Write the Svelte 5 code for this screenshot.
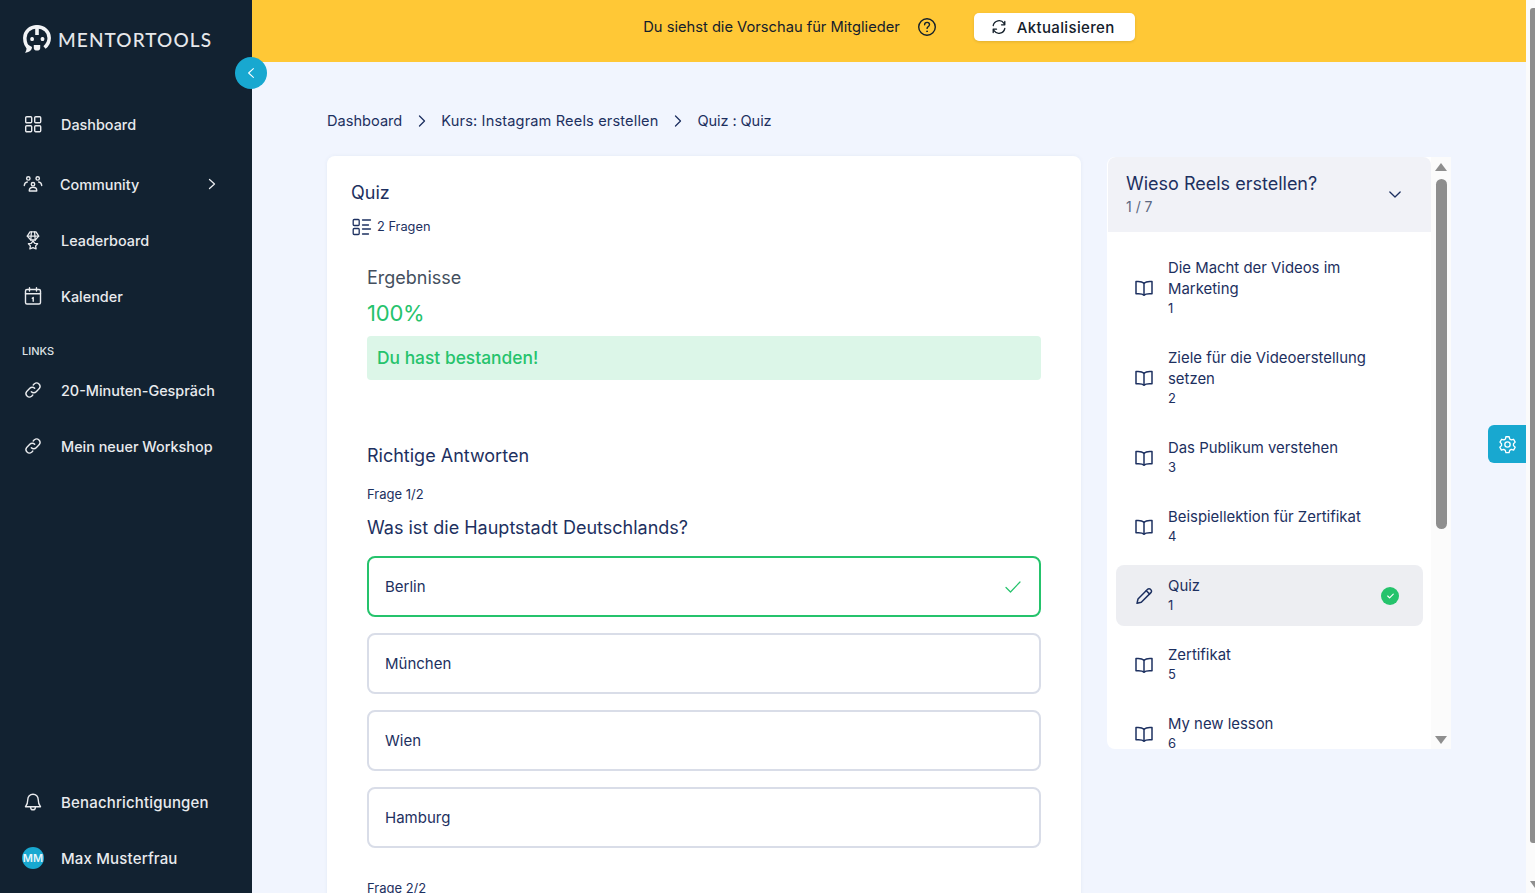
<script>
	const navTop = [
		{ label: 'Dashboard', icon: 'grid' },
		{ label: 'Community', icon: 'people', arrow: true },
		{ label: 'Leaderboard', icon: 'medal' },
		{ label: 'Kalender', icon: 'calendar' }
	];
	const navLinks = ['20-Minuten-Gespräch', 'Mein neuer Workshop'];
	const answers = [
		{ text: 'Berlin', correct: true },
		{ text: 'München' },
		{ text: 'Wien' },
		{ text: 'Hamburg' }
	];
	const lessons = [
		{ title: 'Die Macht der Videos im Marketing', num: 1 },
		{ title: 'Ziele für die Videoerstellung setzen', num: 2 },
		{ title: 'Das Publikum verstehen', num: 3 },
		{ title: 'Beispiellektion für Zertifikat', num: 4 },
		{ title: 'Quiz', num: 1, quiz: true },
		{ title: 'Zertifikat', num: 5 },
		{ title: 'My new lesson', num: 6 }
	];
</script>

{#snippet linkIcon()}
	<svg class="nav-icon" viewBox="0 0 20 20" fill="none" stroke="currentColor" stroke-width="1.4" stroke-linecap="round" stroke-linejoin="round">
		<path d="M8.3 11.7a3.4 3.4 0 0 0 4.9 0l3.1-3.1a3.5 3.5 0 0 0-4.9-4.9l-1.2 1.2" />
		<path d="M11.7 8.3a3.4 3.4 0 0 0-4.9 0l-3.1 3.1a3.5 3.5 0 0 0 4.9 4.9l1.2-1.2" />
	</svg>
{/snippet}

{#snippet bookIcon()}
	<svg class="lesson-icon" viewBox="0 0 20 20" fill="none" stroke="currentColor" stroke-width="1.5" stroke-linecap="round" stroke-linejoin="round">
		<path d="M10 5.2C8.6 3.9 6.6 3.4 3.6 3.5H2v12.2h2.5c2.6 0 4.4.4 5.5 1.4 1.1-1 2.9-1.4 5.5-1.4H18V3.5h-1.6c-3 -.1-5 .4-6.4 1.7Z" />
		<path d="M10 5.2v11.9" />
	</svg>
{/snippet}

<div class="app">
	<aside class="sidebar">
		<div class="logo">
			<svg class="logo-mark" viewBox="0 0 28 28" fill="none">
				<path stroke="#f2f4f6" stroke-width="3.500" d="M7 24C3 21.500 1.800 17 1.800 13 1.800 6.500 7 1.800 14 1.800S26.200 6.500 26.200 13c0 4-1.700 7-4.700 9.500" />
				<path fill="#f2f4f6" d="M3 18.500 9 22c0 3-2.200 5.300-7 5.700 1.700-2.200 2.200-5 1-9.200Z" />
				<rect x="12.200" y="0.500" width="3.600" height="9.500" fill="#f2f4f6" />
				<rect x="7.300" y="12" width="3.600" height="4" rx="1.500" fill="#f2f4f6" />
				<rect x="17.700" y="12" width="3.600" height="4" rx="1.500" fill="#f2f4f6" />
				<path fill="#f2f4f6" d="M10.800 20h6.400v3.300c0 1.400-1.400 2.300-3.200 2.300s-3.200-.9-3.200-2.300Z" />
			</svg>
			<span class="logo-text">MENTORTOOLS</span>
		</div>

		<nav class="nav-main">
			{#each navTop as item}
				<div class="nav-item" class:community={item.arrow}>
					{#if item.icon === 'grid'}
						<svg class="nav-icon" viewBox="0 0 20 20" fill="none" stroke="currentColor" stroke-width="1.4">
							<rect x="2.700" y="2.700" width="6" height="6" rx="1" />
							<rect x="11.700" y="2.700" width="6" height="6" rx="1" />
							<rect x="2.700" y="11.700" width="6" height="6" rx="1" />
							<rect x="11.700" y="11.700" width="6" height="6" rx="1" />
						</svg>
					{:else if item.icon === 'people'}
						<svg class="nav-icon" viewBox="0 0 20 20" fill="none" stroke="currentColor" stroke-width="1.400" stroke-linecap="round" stroke-linejoin="round">
							<circle cx="5.300" cy="4.400" r="1.700" />
							<circle cx="14.700" cy="4.400" r="1.700" />
							<circle cx="10" cy="10.200" r="1.700" />
							<path d="M1.300 11.500c.2-2 1.400-3.300 3-3.500M18.700 11.500c-.2-2-1.400-3.300-3-3.500M6.300 17v-.7c0-1.700 1.500-3 3.700-3s3.700 1.300 3.700 3v.7Z" />
						</svg>
					{:else if item.icon === 'medal'}
						<svg class="nav-icon" viewBox="0 0 20 20" fill="none" stroke="currentColor" stroke-width="1.300" stroke-linecap="round" stroke-linejoin="round">
							<path d="M7 1.800h6l2.700 4.300-3.500 3.900H7.800L4.300 6.100Z" />
							<path d="M8.400 2 7.800 10M11.600 2l.6 8M4.300 6.100h11.400" />
							<path d="m10 11 1.800 2.400 2.800.3-2 2.200.5 3-3.100-1.300-3.100 1.300.5-3-2-2.200 2.800-.3Z" />
						</svg>
					{:else}
						<svg class="nav-icon" viewBox="0 0 20 20" fill="none" stroke="currentColor" stroke-width="1.400" stroke-linecap="round" stroke-linejoin="round">
							<rect x="2.500" y="3.500" width="15" height="14.500" rx="1.500" />
							<path d="M2.500 7.800h15M6.500 1.700v3.400M13.500 1.700v3.400M9.200 12.200l1-.7v3.800" />
						</svg>
					{/if}
					<span class="nav-label">{item.label}</span>
					{#if item.arrow}
						<svg class="nav-arrow" viewBox="0 0 8 12" fill="none" stroke="currentColor" stroke-width="1.300" stroke-linecap="round" stroke-linejoin="round">
							<path d="m1.500 1.500 5 4.500-5 4.500" />
						</svg>
					{/if}
				</div>
			{/each}

			<div class="nav-heading">LINKS</div>
			{#each navLinks as link}
				<div class="nav-item">
					{@render linkIcon()}
					<span class="nav-label">{link}</span>
				</div>
			{/each}
		</nav>

		<div class="nav-bottom">
			<div class="nav-item">
				<svg class="nav-icon" viewBox="0 0 20 20" fill="none" stroke="currentColor" stroke-width="1.400" stroke-linecap="round" stroke-linejoin="round">
					<path d="M10 2.200c-3.100 0-5.200 2.300-5.200 5.300 0 4-1 5.600-2.300 7.200h15c-1.300-1.600-2.300-3.200-2.300-7.200 0-3-2.100-5.300-5.200-5.300Z" />
					<path d="M7.600 14.900c0 1.800 1 2.900 2.400 2.900s2.400-1.100 2.400-2.900" />
				</svg>
				<span class="nav-label">Benachrichtigungen</span>
			</div>
			<div class="nav-item">
				<span class="avatar">MM</span>
				<span class="nav-label">Max Musterfrau</span>
			</div>
		</div>
	</aside>

	<button class="collapse" aria-label="Seitenleiste einklappen">
		<svg viewBox="0 0 10 14" width="8" height="12" fill="none" stroke="currentColor" stroke-width="1.300" stroke-linecap="round" stroke-linejoin="round">
			<path d="M8 1.500 2 7l6 5.500" />
		</svg>
	</button>

	<div class="main">
		<header class="banner">
			<span class="banner-text">Du siehst die Vorschau für Mitglieder</span>
			<svg class="help" viewBox="0 0 20 20" fill="none" stroke="currentColor" stroke-width="1.400" stroke-linecap="round">
				<circle cx="10" cy="10" r="8.300" />
				<path d="M7.600 7.800c0-1.500 1-2.400 2.500-2.400s2.400.9 2.400 2.200c0 1.100-.6 1.700-1.500 2.200-.7.400-.9.800-.9 1.600" />
				<circle cx="10" cy="14.300" r=".5" fill="currentColor" stroke-width=".7" />
			</svg>
			<button class="refresh">
				<svg viewBox="0 0 16 16" width="16" height="16" fill="none" stroke="currentColor" stroke-width="1.300" stroke-linecap="round" stroke-linejoin="round">
					<path d="M2.200 6.500A6 6 0 0 1 13 4.300l.7 1.500M13.800 2.500v3.300h-3.300" />
					<path d="M13.800 9.500A6 6 0 0 1 3 11.700l-.7-1.500M2.200 13.500v-3.300h3.300" />
				</svg>
				Aktualisieren
			</button>
		</header>

		<div class="content">
			<div class="breadcrumbs">
				<span>Dashboard</span>
				<svg viewBox="0 0 8 12" width="8" height="12" fill="none" stroke="currentColor" stroke-width="1.300" stroke-linecap="round" stroke-linejoin="round"><path d="m1.500 1 5 5-5 5" /></svg>
				<span class="crumb-course">Kurs: Instagram Reels erstellen</span>
				<svg viewBox="0 0 8 12" width="8" height="12" fill="none" stroke="currentColor" stroke-width="1.300" stroke-linecap="round" stroke-linejoin="round"><path d="m1.500 1 5 5-5 5" /></svg>
				<span class="crumb-last">Quiz : Quiz</span>
			</div>

			<div class="columns">
				<section class="quiz-card">
					<h1 class="quiz-title">Quiz</h1>
					<div class="quiz-meta">
						<svg viewBox="0 0 20 18" width="20" height="18" fill="none" stroke="currentColor" stroke-width="1.300" stroke-linecap="round" stroke-linejoin="round">
							<rect x="1.200" y="1.500" width="6" height="6" rx="1" />
							<rect x="1.200" y="10.500" width="6" height="6" rx="1" />
							<path d="M10.500 2h8M10.500 7h6M10.500 11h8M10.500 16h6" />
						</svg>
						<span>2 Fragen</span>
					</div>

					<div class="results">
						<h2 class="section-title gray">Ergebnisse</h2>
						<div class="score">100%</div>
						<div class="passed">Du hast bestanden!</div>

						<h2 class="section-title answers-title">Richtige Antworten</h2>
						<div class="question-count">Frage 1/2</div>
						<h3 class="question">Was ist die Hauptstadt Deutschlands?</h3>
						<div class="options">
							{#each answers as answer}
								<div class="option" class:correct={answer.correct}>
									<span>{answer.text}</span>
									{#if answer.correct}
										<svg viewBox="0 0 16 12" width="16" height="12" fill="none" stroke="currentColor" stroke-width="1.200" stroke-linecap="round" stroke-linejoin="round"><path d="m1 6.500 4.500 4.500L15 1" /></svg>
									{/if}
								</div>
							{/each}
						</div>
						<div class="question-count next">Frage 2/2</div>
					</div>
				</section>

				<aside class="lesson-panel">
					<div class="lesson-scroll">
						<div class="module-head">
							<div>
								<div class="module-title">Wieso Reels erstellen?</div>
								<div class="module-count">1 / 7</div>
							</div>
							<svg viewBox="0 0 14 8" width="12" height="7" fill="none" stroke="currentColor" stroke-width="1.500" stroke-linecap="round" stroke-linejoin="round"><path d="m1 1 6 6 6-6" /></svg>
						</div>
						<div class="lesson-list">
							{#each lessons as lesson}
								<div class="lesson" class:active={lesson.quiz}>
									{#if lesson.quiz}
										<svg class="lesson-icon" viewBox="0 0 20 20" fill="none" stroke="currentColor" stroke-width="1.500" stroke-linecap="round" stroke-linejoin="round">
											<path d="M3 17.300 4 13 13.600 3.300a2 2 0 0 1 2.900 0l.4.400a2 2 0 0 1 0 2.900L7.300 16.200Z" />
											<path d="m12.300 4.700 3.200 3.200" />
										</svg>
									{:else}
										{@render bookIcon()}
									{/if}
									<div class="lesson-text">
										<div class="lesson-title">{lesson.title}</div>
										<div class="lesson-num">{lesson.num}</div>
									</div>
									{#if lesson.quiz}
										<span class="done">
											<svg viewBox="0 0 10 8" width="7" height="6" fill="none" stroke="#fff" stroke-width="1.600" stroke-linecap="round" stroke-linejoin="round"><path d="m1 4 2.700 2.700L9 1.300" /></svg>
										</span>
									{/if}
								</div>
							{/each}
						</div>
					</div>
					<div class="panel-scrollbar">
						<span class="arrow up"></span>
						<span class="thumb"></span>
						<span class="arrow down"></span>
					</div>
				</aside>
			</div>
		</div>
	</div>

	<div class="page-scrollbar">
		<span class="page-thumb"></span>
		<span class="page-arrow"></span>
	</div>

	<button class="settings" aria-label="Einstellungen">
		<svg viewBox="0 0 20 20" width="19" height="19" fill="none" stroke="currentColor" stroke-width="1.400" stroke-linecap="round" stroke-linejoin="round">
			<circle cx="10" cy="10" r="2.800" />
			<path d="M8.300 1.800h3.400l.6 2.400 1.700 1 2.400-.7 1.700 3-1.800 1.700v2l1.800 1.700-1.700 3-2.400-.7-1.700 1-.6 2.400H8.300l-.6-2.400-1.700-1-2.400.7-1.700-3 1.800-1.700v-2L2.100 7.500l1.700-3 2.400.7 1.700-1Z" />
		</svg>
	</button>
</div>

<style>
	:global(body) {
		margin: 0;
		background: #f1f5fe;
	}

	.app {
		display: flex;
		height: 893px;
		overflow: hidden;
		position: relative;
		font-family: Inter, 'Liberation Sans', sans-serif;
		color: #1d3060;
	}

	h1, h2, h3 {
		margin: 0;
		font-weight: 400;
	}

	button {
		border: none;
		font-family: inherit;
		padding: 0;
	}

	/* sidebar */
	.sidebar {
		flex: 0 0 252px;
		display: flex;
		flex-direction: column;
		background: #122231;
		color: #e9ebee;
	}

	.logo {
		display: flex;
		align-items: center;
		gap: 7px;
		padding: 25px 0 0 23px;
		height: 28px;
	}

	.logo-mark {
		width: 28px;
		height: 28px;
		flex: none;
	}

	.logo-text {
		font-family: Lato, sans-serif;
		font-size: 19px;
		font-weight: 500;
		letter-spacing: 1.1px;
		color: #e6e8eb;
	}

	.nav-main {
		flex: 1;
		padding-top: 43px;
	}

	.nav-item {
		display: flex;
		align-items: center;
		height: 56px;
		padding-left: 23px;
		font-size: 14.4px;
		font-weight: 500;
	}

	.nav-item.community {
		margin-top: 4px;
	}

	.nav-item.community .nav-label {
		margin-left: 17px;
	}

	.nav-icon {
		width: 20px;
		height: 20px;
		flex: none;
	}

	.nav-label {
		margin-left: 18px;
		white-space: nowrap;
	}

	.nav-arrow {
		width: 8px;
		height: 12px;
		margin-left: 69px;
	}

	.nav-heading {
		font-size: 11px;
		font-weight: 500;
		line-height: 14px;
		padding: 20px 0 4px 22px;
		color: #dfe2e6;
	}

	.nav-bottom {
		padding-bottom: 7px;
	}

	.nav-bottom .nav-item {
		font-size: 15px;
		letter-spacing: 0.17px;
	}

	.avatar {
		width: 22px;
		height: 22px;
		margin-left: -1px;
		border-radius: 50%;
		background: #18a8d0;
		color: #e6f6fb;
		font-size: 11px;
		font-weight: 600;
		line-height: 22px;
		letter-spacing: 0;
		text-align: center;
		flex: none;
	}

	.avatar + .nav-label {
		margin-left: 17px;
	}

	.collapse {
		position: absolute;
		left: 235px;
		top: 57px;
		width: 32px;
		height: 32px;
		border-radius: 50%;
		background: #18a8d0;
		color: #fff;
		display: flex;
		align-items: center;
		justify-content: center;
		z-index: 2;
	}

	/* main column */
	.main {
		flex: 1;
		min-width: 0;
		display: flex;
		flex-direction: column;
	}

	.banner {
		flex: 0 0 62px;
		background: #ffc836;
		color: #14202b;
		display: flex;
		align-items: center;
		justify-content: center;
		font-size: 14.7px;
		padding-bottom: 8px;
		box-sizing: border-box;
		height: 62px;
	}

	.help {
		width: 20px;
		height: 20px;
		margin-left: 17px;
	}

	.refresh {
		display: flex;
		align-items: center;
		gap: 10px;
		width: 161px;
		height: 28px;
		margin-left: 37px;
		padding-left: 17px;
		box-sizing: border-box;
		background: #fff;
		border-radius: 5px;
		color: #14202b;
		font-size: 15px;
		font-weight: 500;
		letter-spacing: 0.35px;
		box-shadow: 0 1px 3px rgba(0, 0, 0, 0.12);
	}

	.content {
		padding: 49px 75px 0;
	}

	.breadcrumbs {
		display: flex;
		align-items: center;
		gap: 15.5px;
		height: 20px;
		font-size: 14.6px;
	}

	.crumb-course {
		letter-spacing: 0.14px;
	}

	.crumb-last {
		letter-spacing: -0.1px;
	}

	.columns {
		display: flex;
		align-items: flex-start;
		gap: 26px;
		margin-top: 25px;
	}

	.quiz-card {
		flex: 0 0 754px;
		box-sizing: border-box;
		height: 780px;
		padding: 25px 24px 0;
		background: #fff;
		border-radius: 8px;
		box-shadow: 0 0 4px rgba(40, 60, 120, 0.06);
	}

	.quiz-title {
		font-size: 18px;
		line-height: 24px;
	}

	.quiz-meta {
		display: flex;
		align-items: center;
		gap: 5px;
		margin-top: 13px;
		font-size: 12.8px;
		line-height: 18px;
		padding-left: 1px;
	}

	.results {
		padding: 0 16px;
	}

	.section-title {
		font-size: 18px;
		line-height: 24px;
	}

	.gray {
		color: #444f5e;
		margin-top: 30px;
	}

	.score {
		margin-top: 9px;
		font-size: 22px;
		letter-spacing: -0.2px;
		line-height: 28px;
		color: #25c36c;
	}

	.passed {
		margin-top: 9px;
		height: 44px;
		padding-left: 10px;
		border-radius: 4px;
		background: #dcf6e8;
		color: #25c36c;
		font-size: 17.4px;
		font-weight: 500;
		line-height: 44px;
	}

	.answers-title {
		margin-top: 64px;
	}

	.question-count {
		margin-top: 17px;
		font-size: 13px;
		line-height: 18px;
	}

	.question-count.next {
		margin-top: 31px;
	}

	.question {
		margin-top: 13px;
		font-size: 18px;
		line-height: 24px;
	}

	.options {
		display: flex;
		flex-direction: column;
		gap: 16px;
		margin-top: 16px;
	}

	.option {
		display: flex;
		align-items: center;
		justify-content: space-between;
		height: 61px;
		box-sizing: border-box;
		padding: 0 18px 0 16px;
		border: 2px solid #d9dde8;
		border-radius: 8px;
		font-size: 15px;
	}

	.option.correct {
		border-color: #25c36c;
	}

	.option svg {
		color: #25c36c;
	}

	/* lesson panel */
	.lesson-panel {
		flex: 0 0 344px;
		height: 592px;
		margin-top: 1px;
		display: flex;
		background: #fff;
		border-radius: 8px 0 0 8px;
		overflow: hidden;
	}

	.lesson-scroll {
		flex: 1;
		min-width: 0;
		overflow: hidden;
	}

	.module-head {
		display: flex;
		align-items: center;
		justify-content: space-between;
		height: 75px;
		box-sizing: border-box;
		padding: 0 30px 0 18px;
		margin-left: 1px;
		background: #f1f2f7;
		border-radius: 8px 8px 0 0;
	}

	.module-title {
		font-size: 18px;
		line-height: 25px;
	}

	.module-count {
		font-size: 14px;
		line-height: 22px;
		color: #5c6780;
	}

	.lesson-list {
		display: flex;
		flex-direction: column;
		gap: 8px;
		padding: 15px 8px 0 9px;
	}

	.lesson {
		display: flex;
		align-items: center;
		flex: none;
		padding: 10px 24px 10px 18px;
		border-radius: 8px;
	}

	.lesson.active {
		background: #edeef2;
	}

	.lesson-icon {
		width: 20px;
		height: 20px;
		flex: none;
		margin-right: 14px;
	}

	.lesson-text {
		flex: 1;
		min-width: 0;
		padding-right: 24px;
	}

	.lesson-title {
		padding-top: 1px;
		font-size: 14.9px;
		line-height: 21px;
	}

	.lesson-num {
		font-size: 13px;
		line-height: 16px;
		padding-bottom: 3px;
	}

	.done {
		width: 18px;
		height: 18px;
		border-radius: 50%;
		background: #25c36c;
		display: flex;
		align-items: center;
		justify-content: center;
		flex: none;
	}

	.panel-scrollbar {
		flex: 0 0 20px;
		display: flex;
		flex-direction: column;
		align-items: center;
		box-sizing: border-box;
		background: #fbfbfb;
	}

	.arrow {
		width: 0;
		height: 0;
		border-left: 6.5px solid transparent;
		border-right: 6.5px solid transparent;
	}

	.arrow.up {
		margin-top: 6px;
		border-bottom: 8px solid #8e8e8e;
	}

	.arrow.down {
		margin-top: auto;
		margin-bottom: 5px;
		border-top: 8px solid #8e8e8e;
	}

	.thumb {
		width: 11px;
		height: 350px;
		margin-top: 8px;
		border-radius: 5.500px;
		background: #8e8e8e;
	}

	/* page scrollbar */
	.page-scrollbar {
		flex: 0 0 9px;
		display: flex;
		flex-direction: column;
		align-items: flex-end;
		background: #fbfbfb;
	}

	.page-thumb {
		width: 5px;
		height: 835px;
		margin-top: 8px;
		border-radius: 3px 0 0 3px;
		background: #8e8e8e;
	}

	.page-arrow {
		margin-top: auto;
		margin-bottom: 5px;
		width: 0;
		height: 0;
		border-left: 5px solid transparent;
		border-top: 7px solid #8e8e8e;
	}

	.settings {
		position: absolute;
		left: 1488px;
		top: 425px;
		width: 38px;
		height: 38px;
		border-radius: 6px 0 0 6px;
		background: #18a8d0;
		color: #fff;
		display: flex;
		align-items: center;
		justify-content: center;
	}
</style>
